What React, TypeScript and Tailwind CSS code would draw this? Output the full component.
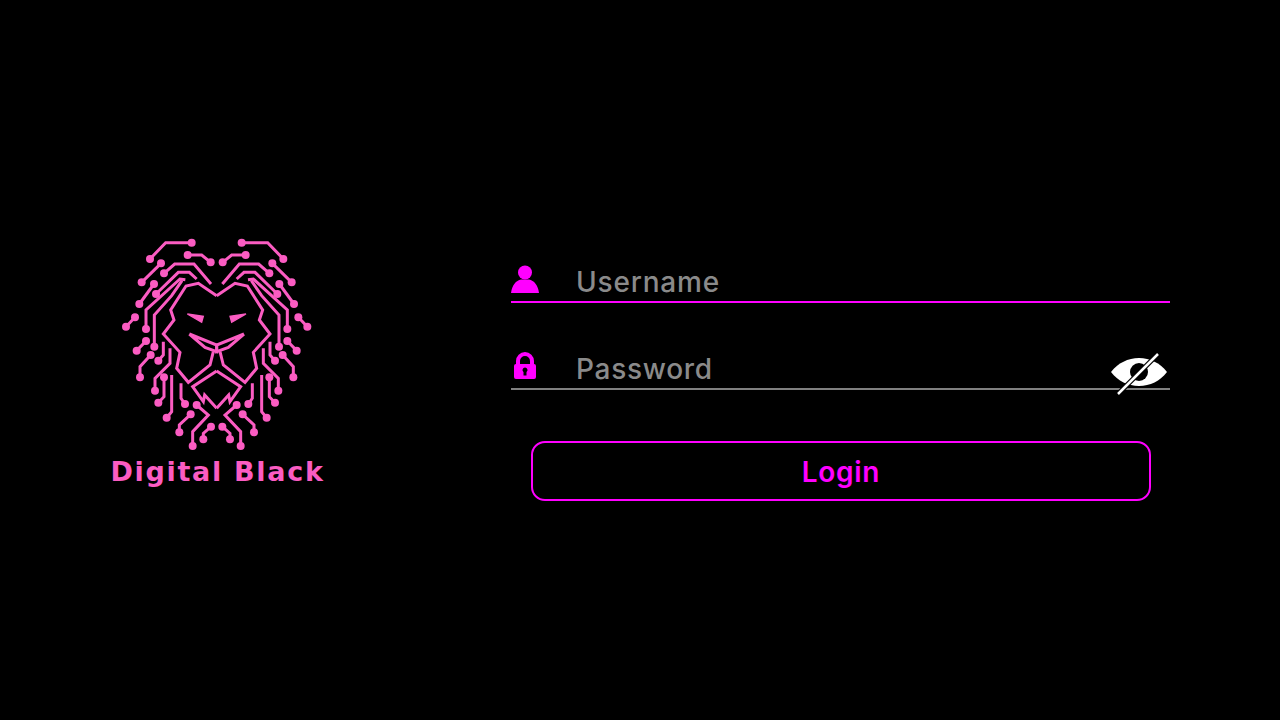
const pink = '#fb5cc2'

// [x, y] dots of the left half of the lion, in 3x zoom units
const dots: [number, number][] = [
  [275, 38], [150, 87], [263, 75], [332, 97], [183, 100], [125, 157], [192, 130], [162, 162],
  [118, 222], [168, 192], [105, 262], [78, 290], [138, 297], [163, 350], [138, 333], [110, 362],
  [152, 375], [175, 392], [120, 442], [192, 442], [165, 482], [175, 518], [200, 563], [255, 522],
  [290, 525], [272, 553], [238, 607], [278, 648], [310, 628], [333, 590],
]

const lines = [
  '275,38 197,38 150,87',
  '263,75 305,75 332,97',
  '183,100 125,157',
  '192,130 224,102 282,102 333,162',
  '162,162 118,222',
  '168,192 235,127 268,127 290,147',
  '138,297 138,240 240,147 256,149',
  '163,350 163,255 215,197 246,152',
  '105,262 78,290',
  '138,333 110,362',
  '152,375 120,410 120,442',
  '175,392 190,375 190,335',
  '210,355 210,400 165,445 165,482',
  '175,518 192,500 192,442',
  '200,563 215,545 215,435',
  '255,522 243,505 243,460',
  '290,525 325,555 278,605 278,648',
  '272,553 238,585 238,607',
  '310,628 310,610 333,590',
  // head
  '350,197 295,160 258,168 212,240 222,270 190,312 240,367 230,415 265,457 330,405 340,365',
  // chin
  '350,423 278,470 310,515 314,495 350,535',
]

function Lion() {
  const half = (
    <>
      {lines.map((l) => (
        <polyline key={l} points={l} fill="none" stroke={pink} strokeWidth="9" />
      ))}
      {dots.map(([x, y]) => (
        <circle key={`${x}-${y}`} cx={x} cy={y} r="12" fill={pink} />
      ))}
      <polygon points="262,252 310,259 305,277" fill={pink} stroke={pink} strokeWidth="4" />
      <polyline points="268,312 350,345 350,365 315,352 268,312" fill="none" stroke={pink} strokeWidth="9" />
    </>
  )
  return (
    <svg width="235" height="225" viewBox="0 0 705 675" className="block">
      {half}
      <g transform="matrix(-1 0 0 1 700 0)">{half}</g>
    </svg>
  )
}

function EyeOff() {
  return (
    <svg width="56" height="46" viewBox="0 0 56 46" className="block">
      <path d="M0 21 C7 12 17 7 28 7 C39 7 49 12 56 21 C49 30 39 35 28 35 C17 35 7 30 0 21 Z" fill="#fff" />
      <circle cx="28" cy="21" r="9" fill="#000" />
      <path d="M7 43 L47 3" stroke="#000" strokeWidth="5" />
      <path d="M7 43 L47 3" stroke="#fff" strokeWidth="2.5" />
    </svg>
  )
}

export default function App() {
  return (
    <div className="flex h-[720px] w-[1280px] overflow-hidden bg-black pl-[100px] pt-[230px] font-['Inter',sans-serif]">
      <div className="flex w-[235px] flex-col items-center">
        <Lion />
        <div
          className="mt-[1px] whitespace-nowrap text-[27px] font-bold leading-[32px] tracking-[1.7px] text-[#fb5cc2]"
          style={{ fontFamily: '"DejaVu Sans", sans-serif' }}
        >
          Digital Black
        </div>
      </div>

      <form className="ml-[176px] flex w-[659px] flex-col pt-[32px]">
        <label className="flex h-[41px] items-center border-b-2 border-[#ff00ff] pb-[3px]">
          <svg width="28" height="30" viewBox="0 0 28 30" className="mt-[-3px] block shrink-0" fill="#ff00ff">
            <circle cx="14" cy="8.5" r="7" />
            <path d="M0 29 C1 21 5 16.5 10 15.5 L18 15.5 C23 16.5 27 21 28 29 Z" />
          </svg>
          <input
            placeholder="Username"
            className="ml-[37px] mt-[4px] w-full bg-transparent text-[28px] font-medium tracking-[0.8px] outline-none placeholder:text-[#8a8a8a]"
          />
        </label>

        <label className="relative mt-[45px] flex h-[42px] items-center border-b-2 border-[#808080] pb-[3px]">
          <svg width="22" height="27" viewBox="0 0 22 27" className="ml-[3px] mt-[-2px] block shrink-0" fill="#ff00ff">
            <path d="M2 13 V9 A9 9 0 0 1 20 9 V13 H16 V9 A5 5 0 0 0 6 9 V13 Z" />
            <path fillRule="evenodd" d="M2 12 H20 A2 2 0 0 1 22 14 V25 A2 2 0 0 1 20 27 H2 A2 2 0 0 1 0 25 V14 A2 2 0 0 1 2 12 Z M11 15.5 A2.5 2.5 0 0 0 9.5 20 V23.5 H12.5 V20 A2.5 2.5 0 0 0 11 15.5 Z" />
          </svg>
          <input
            placeholder="Password"
            className="ml-[40px] mt-[4px] w-full bg-transparent text-[28px] font-medium tracking-[0.7px] outline-none placeholder:text-[#8a8a8a]"
          />
          <div className="absolute right-[3px] top-[3px]">
            <EyeOff />
          </div>
        </label>

        <button
          type="button"
          className="ml-[20px] mt-[51px] h-[60px] w-[620px] rounded-[14px] border-2 border-[#ff00ff] pt-[2px] text-[28px] font-semibold tracking-[0.7px] text-[#ff00ff]"
        >
          Login
        </button>
      </form>
    </div>
  )
}
